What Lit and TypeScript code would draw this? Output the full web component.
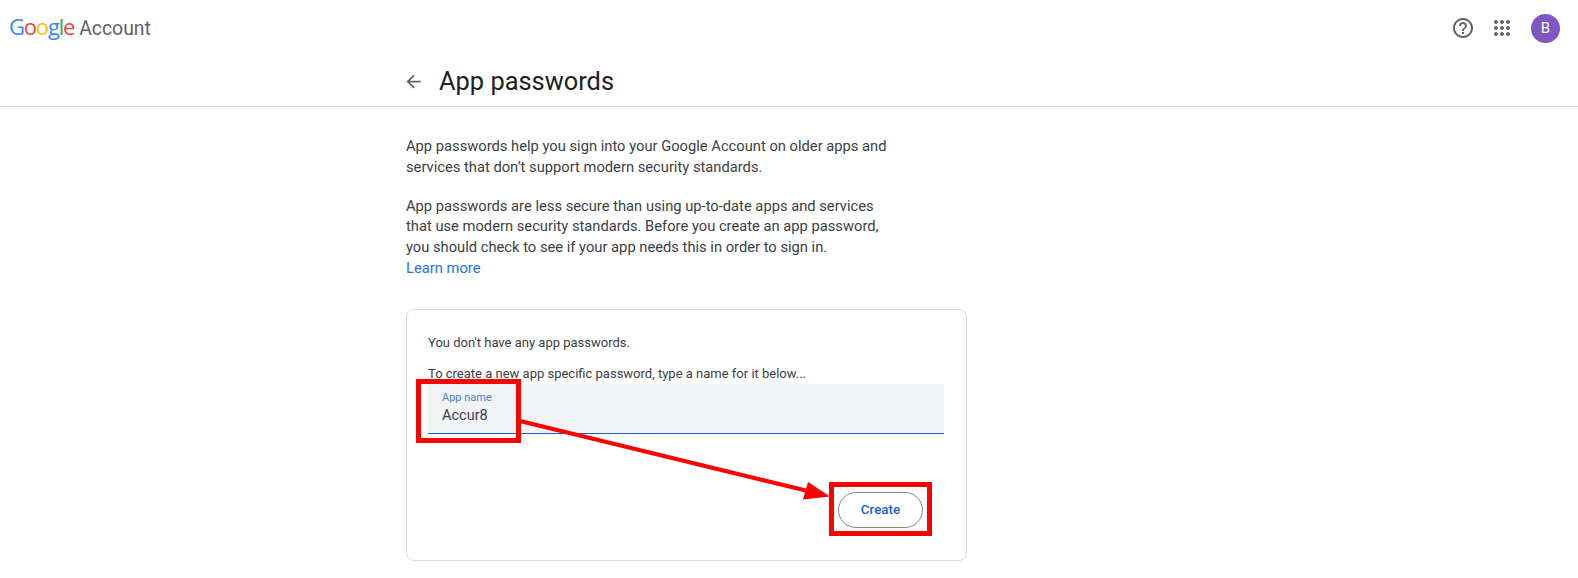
import { LitElement, html, css, svg } from "lit";
import { customElement } from "lit/decorators.js";

@customElement("app-root")
export class AppRoot extends LitElement {
  static styles = css`
    :host { display: block; position: relative; width: 1578px; height: 578px; overflow: hidden; background: #fff; font-family: Roboto, "Liberation Sans", sans-serif; color: #3c4043; }
    .top { height: 56px; display: flex; align-items: center; justify-content: space-between; padding: 0 18px 0 9px; }
    .brand { display: flex; align-items: baseline; line-height: 24px; margin-top: -2px; }
    .logo { font-family: "Open Sans", Roboto, sans-serif; font-size: 22px; letter-spacing: -1.2px; font-weight: 500; margin-right: 5px; }
    .b { color: #4285f4; } .r { color: #ea4335; } .y { color: #fbbc05; } .g { color: #34a853; }
    .acct { color: #5f6368; font-size: 19.4px; font-weight: 400; }
    .tools { display: flex; align-items: center; gap: 15px; }
    .tools svg { display: block; fill: #5f6368; }
    .avatar { width: 29px; height: 29px; border-radius: 50%; background: #7e57c2; color: #fff; font-size: 15px; display: flex; align-items: center; justify-content: center; margin-left: 2px; }
    .titlebar { height: 50px; border-bottom: 1px solid #dadce0; display: flex; align-items: center; padding-left: 403px; gap: 15px; }
    .titlebar svg { fill: #5f6368; display: block; }
    h1 { margin: 0; font-size: 25.4px; font-weight: 400; color: #202124; line-height: 52px; }
    main { padding: 29px 0 0 406px; width: 485px; }
    p { margin: 0 0 18px; font-size: 14.72px; line-height: 20.8px; }
    .flush { margin-bottom: 0; }
    a { color: #1a73e8; text-decoration: none; display: block; }
    .card { width: 561px; height: 252px; box-sizing: border-box; border: 1px solid #dadce0; border-radius: 8px; margin-top: 30px; padding: 23px 22px 0 21px; display: flex; flex-direction: column; font-size: 13px; }
    .line { line-height: 20px; }
    .line.second { margin-top: 11px; height: 20px; }
    .field { height: 50px; box-sizing: border-box; background: #f1f3f4; border-bottom: 1px solid #1a5fc0; padding: 7px 14px 0; }
    .label { font-size: 11px; line-height: 14px; color: #4a80d8; }
    .value { font-size: 14.5px; line-height: 20px; color: #3c4043; margin-top: 1px; }
    .actions { display: flex; justify-content: flex-end; margin-top: 58px; padding-right: 21px; }
    button { width: 85px; height: 36px; box-sizing: border-box; border: 1px solid #80868b; border-radius: 18px; background: #fff; color: #1a5fd8; font: 500 13.4px Roboto, sans-serif; }
    .marks { position: absolute; left: 0; top: 0; pointer-events: none; }
  `;

  render() {
    return html`
      <div class="top">
        <div class="brand">
          <span class="logo"><span class="b">G</span><span class="r">o</span><span class="y">o</span><span class="b">g</span><span class="g">l</span><span class="r">e</span></span>
          <span class="acct">Account</span>
        </div>
        <div class="tools">
          <svg width="24" height="24" viewBox="0 0 24 24"><path d="M11 18h2v-2h-2v2zm1-16C6.48 2 2 6.48 2 12s4.48 10 10 10 10-4.48 10-10S17.52 2 12 2zm0 18c-4.41 0-8-3.59-8-8s3.59-8 8-8 8 3.59 8 8-3.59 8-8 8zm0-14c-2.21 0-4 1.79-4 4h2c0-1.1.9-2 2-2s2 .9 2 2c0 2-3 1.75-3 5h2c0-2.25 3-2.5 3-5 0-2.21-1.79-4-4-4z"/></svg>
          <svg width="24" height="24" viewBox="0 0 24 24"><path d="M6 8c1.1 0 2-.9 2-2s-.9-2-2-2-2 .9-2 2 .9 2 2 2zm6 12c1.1 0 2-.9 2-2s-.9-2-2-2-2 .9-2 2 .9 2 2 2zm-6 0c1.1 0 2-.9 2-2s-.9-2-2-2-2 .9-2 2 .9 2 2 2zm0-6c1.1 0 2-.9 2-2s-.9-2-2-2-2 .9-2 2 .9 2 2 2zm6 0c1.1 0 2-.9 2-2s-.9-2-2-2-2 .9-2 2 .9 2 2 2zm4-8c0 1.1.9 2 2 2s2-.9 2-2-.9-2-2-2-2 .9-2 2zm-4 2c1.1 0 2-.9 2-2s-.9-2-2-2-2 .9-2 2 .9 2 2 2zm6 6c1.1 0 2-.9 2-2s-.9-2-2-2-2 .9-2 2 .9 2 2 2zm0 6c1.1 0 2-.9 2-2s-.9-2-2-2-2 .9-2 2 .9 2 2 2z"/></svg>
          <div class="avatar">B</div>
        </div>
      </div>
      <div class="titlebar">
        <svg width="21" height="21" viewBox="0 0 24 24"><path d="M20 11H7.83l5.59-5.59L12 4l-8 8 8 8 1.41-1.41L7.83 13H20v-2z"/></svg>
        <h1>App passwords</h1>
      </div>
      <main>
        <p>App passwords help you sign into your Google Account on older apps and services that don’t support modern security standards.</p>
        <p class="flush">App passwords are less secure than using up-to-date apps and services that use modern security standards. Before you create an app password, you should check to see if your app needs this in order to sign in.</p>
        <p class="flush"><a href="#">Learn more</a></p>
        <div class="card">
          <div class="line">You don't have any app passwords.</div>
          <div class="line second">To create a new app specific password, type a name for it below...</div>
          <div class="field">
            <div class="label">App name</div>
            <div class="value">Accur8</div>
          </div>
          <div class="actions"><button>Create</button></div>
        </div>
      </main>
      <svg class="marks" width="1578" height="578" viewBox="0 0 1578 578">
        ${svg`
          <rect x="418.5" y="381.5" width="100" height="59" fill="none" stroke="#f00" stroke-width="5"/>
          <rect x="831.5" y="484.5" width="98" height="49" fill="none" stroke="#f00" stroke-width="5"/>
          <line x1="520" y1="421" x2="810" y2="491.5" stroke="#f00" stroke-width="4"/>
          <polygon points="830,496.5 803,499.5 808,482" fill="#f00"/>
        `}
      </svg>
    `;
  }
}
